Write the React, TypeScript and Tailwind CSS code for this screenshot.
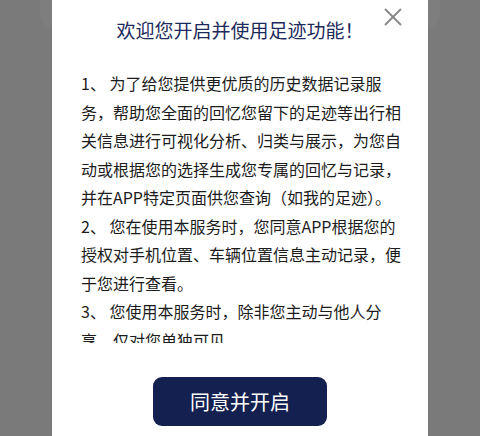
import { X } from 'lucide-react';

const font = { fontFamily: '"Noto Sans CJK SC", "Noto Sans", sans-serif' };

export default function App() {
  return (
    <div
      className="relative flex h-[436px] w-[480px] justify-center overflow-hidden bg-[#7a7a7a]"
      style={font}
    >
      {/* underlying screen behind the overlay */}
      <div className="absolute left-[40px] top-[-20px] h-[50px] w-[400px] rounded-[16px] bg-[#7e7e7e]" />

      <div className="relative flex h-full w-[376px] flex-col items-center bg-white">
        <button className="absolute right-[20px] top-[2px] text-[#8a8a8a]">
          <X size={30} strokeWidth={1.5} />
        </button>

        <div className="flex h-[60px] items-center justify-center text-[19px] text-[#1d2a5c]">
          欢迎您开启并使用足迹功能！
        </div>

        <div className="mt-[9px] h-[274px] w-full overflow-hidden pl-[29px] pr-[26px] text-[16px] leading-[28.5px] text-[#1c1c1c]">
          <p>
            1、 为了给您提供更优质的历史数据记录服务，帮助您全面的回忆您留下的足迹等出行相关信息进行可视化分析、归类与展示，为您自动或根据您的选择生成您专属的回忆与记录，并在APP特定页面供您查询（如我的足迹）。
          </p>
          <p>
            2、 您在使用本服务时，您同意APP根据您的授权对手机位置、车辆位置信息主动记录，便于您进行查看。
          </p>
          <p>3、 您使用本服务时，除非您主动与他人分享，仅对您单独可见。</p>
        </div>

        <button className="mt-[34px] flex h-[49px] w-[174px] items-center justify-center rounded-[9px] bg-[#14204f] text-[20px] text-white">
          同意并开启
        </button>
      </div>
    </div>
  );
}
